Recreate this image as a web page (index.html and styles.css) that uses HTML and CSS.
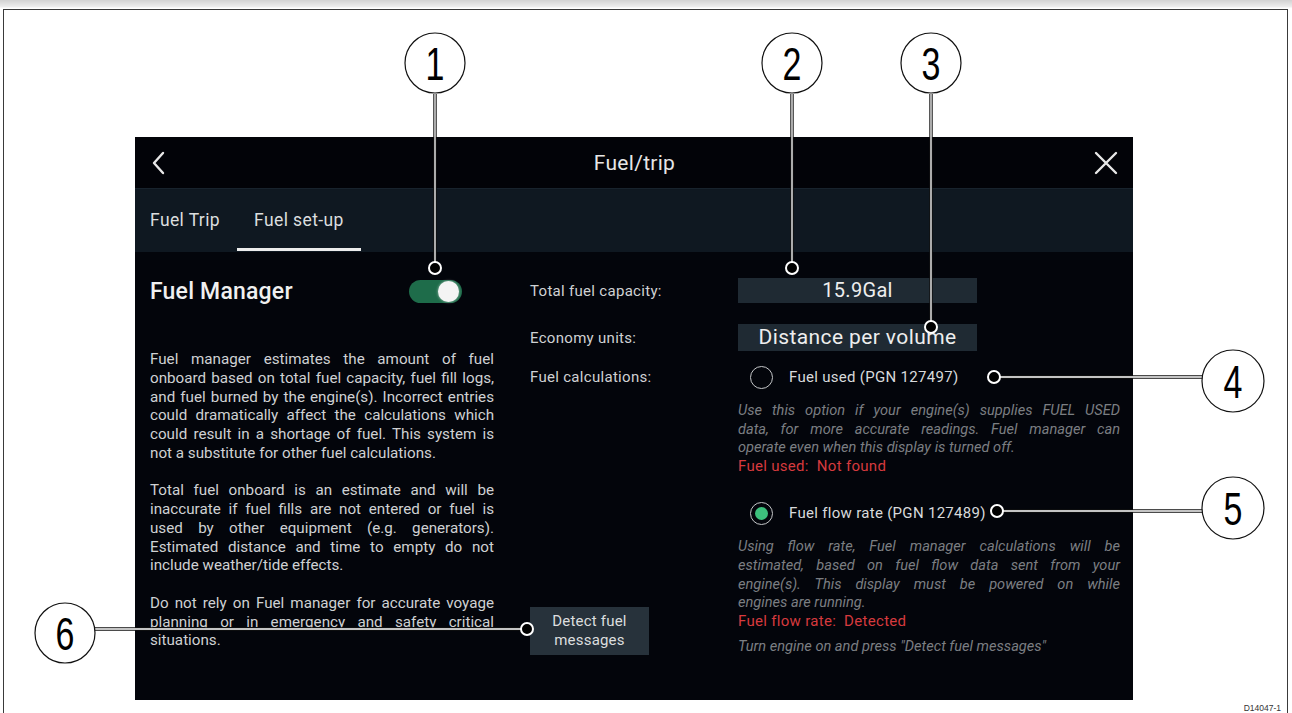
FILE: index.html
```html
<!DOCTYPE html>
<html lang="en">
<head>
  <meta charset="UTF-8" />
  <meta name="viewport" content="width=device-width, initial-scale=1.0"/>
  <title>Fuel/trip set-up</title>
  <link rel="stylesheet" href="styles.css">
</head>
<body>

  <div class="sheet">
    <div class="frame">

      <!-- Display screen -->
      <div class="screen">
        <div class="topbar">
          <svg class="icon back" width="16" height="24" viewBox="0 0 16 24">
            <polyline points="12,2 3,12 12,22" fill="none" stroke="#e8e8e8" stroke-width="2.4" stroke-linecap="round" stroke-linejoin="round"/>
          </svg>
          <div class="title">Fuel/trip</div>
          <svg class="icon close" width="24" height="24" viewBox="0 0 24 24">
            <path d="M2 2 L22 22 M22 2 L2 22" fill="none" stroke="#e8e8e8" stroke-width="2.4" stroke-linecap="round"/>
          </svg>
        </div>

        <div class="tabs">
          <div class="tab">Fuel Trip</div>
          <div class="tab active">Fuel set-up</div>
        </div>

        <div class="content">
          <div class="intro">
            <div class="intro-head">
              <h2>Fuel Manager</h2>
              <span class="toggle"><span class="knob"></span></span>
            </div>
            <p>
              <span class="ln">Fuel manager estimates the amount of fuel</span>
              <span class="ln">onboard based on total fuel capacity, fuel fill logs,</span>
              <span class="ln">and fuel burned by the engine(s). Incorrect entries</span>
              <span class="ln">could dramatically affect the calculations which</span>
              <span class="ln">could result in a shortage of fuel. This system is</span>
              <span class="ln last">not a substitute for other fuel calculations.</span>
            </p>
            <p>
              <span class="ln">Total fuel onboard is an estimate and will be</span>
              <span class="ln">inaccurate if fuel fills are not entered or fuel is</span>
              <span class="ln">used by other equipment (e.g. generators).</span>
              <span class="ln">Estimated distance and time to empty do not</span>
              <span class="ln last">include weather/tide effects.</span>
            </p>
            <p>
              <span class="ln">Do not rely on Fuel manager for accurate voyage</span>
              <span class="ln">planning or in emergency and safety critical</span>
              <span class="ln last">situations.</span>
            </p>
          </div>

          <div class="settings">
            <div class="row">
              <span class="label">Total fuel capacity:</span>
              <span class="field">15.9Gal</span>
            </div>
            <div class="row second">
              <span class="label">Economy units:</span>
              <span class="field big">Distance per volume</span>
            </div>

            <div class="calc">
              <div class="calc-side">
                <span class="label">Fuel calculations:</span>
                <button class="detect">Detect fuel<br>messages</button>
              </div>
              <div class="options">
                <div class="option"><span class="radio"></span>Fuel used (PGN 127497)</div>
                <p class="hint">
                  <span class="ln">Use this option if your engine(s) supplies FUEL USED</span>
                  <span class="ln">data, for more accurate readings. Fuel manager can</span>
                  <span class="ln last">operate even when this display is turned off.</span>
                </p>
                <p class="status">Fuel used:&nbsp; Not found</p>

                <div class="option flow"><span class="radio on"></span>Fuel flow rate (PGN 127489)</div>
                <p class="hint">
                  <span class="ln">Using flow rate, Fuel manager calculations will be</span>
                  <span class="ln">estimated, based on fuel flow data sent from your</span>
                  <span class="ln">engine(s). This display must be powered on while</span>
                  <span class="ln last">engines are running.</span>
                </p>
                <p class="status">Fuel flow rate:&nbsp; Detected</p>
                <p class="hint note">Turn engine on and press "Detect fuel messages"</p>
              </div>
            </div>
          </div>
        </div>
      </div>

      <div class="code">D14047-1</div>
    </div>
  </div>

  <!-- Callouts drawn over the picture -->
  <svg class="callouts" width="1292" height="713" viewBox="0 0 1292 713">
    <g class="leader">
      <path d="M435 94 V262 M792 94 V262 M931 94 V321 M1000 377 H1203 M1003 511 H1202 M95 629 H521"/>
    </g>
    <g class="leader-core">
      <path d="M435 94 V262 M792 94 V262 M931 94 V321 M1000 377 H1203 M1003 511 H1202 M95 629 H521"/>
    </g>
    <g class="dot">
      <circle cx="435" cy="268" r="6"/>
      <circle cx="792" cy="268" r="6"/>
      <circle cx="931" cy="327" r="6"/>
      <circle cx="994" cy="377" r="6"/>
      <circle cx="997" cy="511" r="6"/>
      <circle cx="527" cy="629" r="6"/>
    </g>
    <g class="bubble" transform="translate(435 63)"><circle r="30"/><text transform="scale(0.74 1)" y="17">1</text></g>
    <g class="bubble" transform="translate(792 63)"><circle r="30"/><text transform="scale(0.74 1)" y="17">2</text></g>
    <g class="bubble" transform="translate(931 63)"><circle r="30"/><text transform="scale(0.74 1)" y="17">3</text></g>
    <g class="bubble" transform="translate(1233 381)"><circle r="31"/><text transform="scale(0.74 1)" y="17">4</text></g>
    <g class="bubble" transform="translate(1233 508)"><circle r="31"/><text transform="scale(0.74 1)" y="17">5</text></g>
    <g class="bubble" transform="translate(65 633)"><circle r="30"/><text transform="scale(0.74 1)" y="17">6</text></g>
  </svg>

</body>
</html>
```

FILE: styles.css
```css
body {
  margin: 0;
  width: 1292px;
  height: 713px;
  overflow: hidden;
  position: relative;
  background: #fff;
  font-family: Roboto, "Liberation Sans", sans-serif;
}

.sheet {
  padding-top: 9px;
  background: linear-gradient(#d2d2d2, #eeeeee 7px, #fff 8px);
}

.frame {
  box-sizing: border-box;
  height: 704px;
  margin: 0 4px 0 3px;
  border: 1px solid #3a3a3a;
  border-bottom: none;
  background: #fff;
}

.screen {
  margin: 127px 0 0 131px;
  width: 998px;
  height: 563px;
  background: #03050b;
  color: #d4d6d8;
  display: flex;
  flex-direction: column;
}

.topbar {
  height: 51px;
  background: #020308;
  display: grid;
  grid-template-columns: 1fr auto 1fr;
  align-items: center;
  padding: 0 15px 0 16px;
}

.topbar .title {
  font-size: 21px;
  letter-spacing: 0.3px;
  color: #e6e6e6;
}

.topbar .close {
  justify-self: end;
}

.tabs {
  box-sizing: border-box;
  height: 64px;
  background: #0f1821;
  border-top: 1px solid #18232d;
  display: flex;
  padding: 0 0 1px 15px;
}

.tab {
  display: flex;
  align-items: center;
  padding: 3px 17px 0;
  font-size: 17.5px;
  letter-spacing: 0.4px;
  color: #dcdedf;
  border-bottom: 3px solid transparent;
}

.tab:first-child {
  padding-left: 0;
}

.tab.active {
  border-bottom-color: #ececec;
}

.content {
  flex: 1;
  display: flex;
  padding-left: 15px;
}

.intro {
  width: 344px;
  padding-top: 24px;
}

.intro-head {
  display: flex;
  align-items: center;
  height: 30px;
}

.intro-head h2 {
  margin: 0;
  font-size: 23px;
  font-weight: 500;
  letter-spacing: 0.2px;
  color: #f0f0f0;
}

.toggle {
  position: relative;
  margin-left: auto;
  margin-right: 32px;
  width: 53px;
  height: 23px;
  border-radius: 12px;
  background: #1e6c4a;
}

.toggle .knob {
  position: absolute;
  right: 3px;
  top: 1px;
  width: 21px;
  height: 21px;
  border-radius: 50%;
  background: #f4f4f4;
  box-shadow: 0 0 3px rgba(255,255,255,0.6);
}

.intro p {
  margin: 0 0 18.75px;
  font-size: 15.2px;
  line-height: 18.75px;
  color: #cfd1d3;
}

.intro p:first-of-type {
  margin-top: 44px;
}

.intro .ln {
  word-spacing: -2px;
}

.ln {
  display: block;
  text-align: justify;
  text-align-last: justify;
}

.intro .ln.last,
.ln.last {
  text-align-last: left;
  word-spacing: 0;
}

.settings {
  margin-left: 36px;
  width: 590px;
  padding-top: 26px;
}

.row {
  display: flex;
  align-items: center;
}

.row.second {
  margin-top: 21px;
}

.label {
  width: 208px;
  font-size: 15px;
  letter-spacing: 0.3px;
  line-height: 22px;
  color: #cfd1d3;
}

.field {
  width: 239px;
  height: 25px;
  line-height: 25px;
  text-align: center;
  background: #1f2a33;
  font-size: 20px;
  letter-spacing: 0.3px;
  color: #eeeeee;
}

.field.big {
  height: 27px;
  line-height: 27px;
  font-size: 21px;
  letter-spacing: 0.4px;
}

.calc {
  display: flex;
  margin-top: 15px;
}

.calc-side {
  width: 208px;
  display: flex;
  flex-direction: column;
  justify-content: space-between;
  align-items: flex-start;
}

.detect {
  width: 119px;
  height: 48px;
  padding: 0;
  border: none;
  background: #27323b;
  color: #dcdedf;
  font-family: Roboto, "Liberation Sans", sans-serif;
  font-size: 15px;
  letter-spacing: 0.2px;
  line-height: 19px;
}

.options {
  width: 382px;
}

.option {
  display: flex;
  align-items: center;
  height: 22px;
  font-size: 15px;
  letter-spacing: 0.3px;
  color: #d8dadc;
}

.option.flow {
  margin-top: 27px;
}

.radio {
  box-sizing: border-box;
  width: 23px;
  height: 23px;
  margin: 0 16px 0 12px;
  border: 1.5px solid #c4c6c8;
  border-radius: 50%;
  display: flex;
  align-items: center;
  justify-content: center;
}

.radio.on::after {
  content: "";
  width: 13px;
  height: 13px;
  border-radius: 50%;
  background: #3cc07c;
}

.hint {
  margin: 13px 0 0;
  font-size: 14.6px;
  line-height: 18.6px;
  font-style: italic;
  color: #7b7e82;
}

.hint.note {
  margin-top: 6.5px;
}

.status {
  margin: 0;
  font-size: 15px;
  letter-spacing: 0.3px;
  line-height: 18.6px;
  color: #d63a3e;
}

.code {
  margin-top: 3px;
  padding-right: 6px;
  text-align: right;
  font-family: "Liberation Sans", Arial, sans-serif;
  font-size: 8.5px;
  color: #333;
}

.callouts {
  position: absolute;
  top: 0;
  left: 0;
  pointer-events: none;
}

.leader path {
  fill: none;
  stroke: #111;
  stroke-width: 3.4;
}

.leader-core path {
  fill: none;
  stroke: #fff;
  stroke-width: 1.3;
}

.dot circle {
  fill: #000;
  stroke: #fff;
  stroke-width: 2;
}

.bubble circle {
  fill: #fff;
  stroke: #111;
  stroke-width: 1.2;
}

.bubble text {
  font-family: "Liberation Sans", Arial, sans-serif;
  font-size: 46px;
  text-anchor: middle;
  fill: #000;
}
```
